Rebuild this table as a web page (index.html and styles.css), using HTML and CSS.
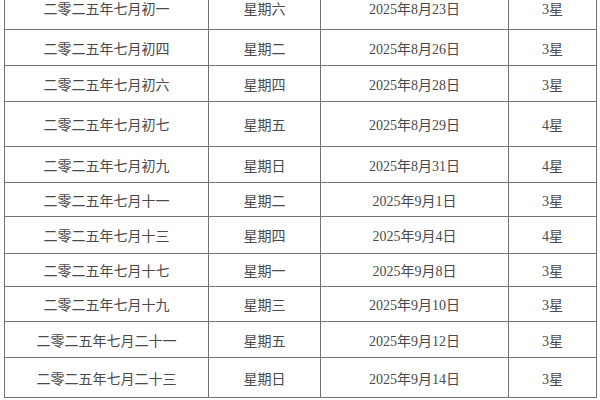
FILE: index.html
```html
<!DOCTYPE html>
<html lang="zh-CN">
<head>
<meta charset="utf-8">
<title>吉日表</title>
<link rel="stylesheet" href="styles.css">
</head>
<body>
<div class="frame">
<table class="days">
<colgroup>
<col class="c-lunar"><col class="c-week"><col class="c-date"><col class="c-star">
</colgroup>
<tbody>
<tr><td>二零二五年七月初一</td><td>星期六</td><td>2025年8月23日</td><td>3星</td></tr>
<tr><td>二零二五年七月初四</td><td>星期二</td><td>2025年8月26日</td><td>3星</td></tr>
<tr><td>二零二五年七月初六</td><td>星期四</td><td>2025年8月28日</td><td>3星</td></tr>
<tr><td>二零二五年七月初七</td><td>星期五</td><td>2025年8月29日</td><td>4星</td></tr>
<tr><td>二零二五年七月初九</td><td>星期日</td><td>2025年8月31日</td><td>4星</td></tr>
<tr><td>二零二五年七月十一</td><td>星期二</td><td>2025年9月1日</td><td>3星</td></tr>
<tr><td>二零二五年七月十三</td><td>星期四</td><td>2025年9月4日</td><td>4星</td></tr>
<tr><td>二零二五年七月十七</td><td>星期一</td><td>2025年9月8日</td><td>3星</td></tr>
<tr><td>二零二五年七月十九</td><td>星期三</td><td>2025年9月10日</td><td>3星</td></tr>
<tr><td>二零二五年七月二十一</td><td>星期五</td><td>2025年9月12日</td><td>3星</td></tr>
<tr><td>二零二五年七月二十三</td><td>星期日</td><td>2025年9月14日</td><td>3星</td></tr>
</tbody>
</table>
</div>
</body>
</html>
```
FILE: styles.css
```css
html, body {
  margin: 0;
  padding: 0;
  background: #ffffff;
}
.frame {
  width: 600px;
  height: 400px;
  overflow: hidden;
}
.days {
  margin: -10px 0 0 4px;
  width: 592px;
  border-collapse: collapse;
  table-layout: fixed;
  font-family: "Liberation Serif", "Noto Sans CJK SC", serif;
  font-size: 14px;
  color: #4a4a4a;
}
.c-lunar { width: 204px; }
.c-week { width: 112px; }
.c-date { width: 188px; }
.c-star { width: 88px; }
.days td {
  border: 1px solid #737373;
  text-align: center;
  vertical-align: middle;
  padding: 4px 0 0 0;
  height: 32px;
  line-height: 16px;
}
.days tr:nth-child(1) td { height: 38px; padding-top: 0; }
.days tr:nth-child(2) td { height: 31px; }
.days tr:nth-child(3) td { height: 31px; }
.days tr:nth-child(4) td { height: 40px; }
.days tr:nth-child(5) td { height: 31px; }
.days tr:nth-child(6) td { height: 29px; }
.days tr:nth-child(7) td { height: 32px; }
.days tr:nth-child(8) td { height: 28px; }
.days tr:nth-child(9) td { height: 30px; }
.days tr:nth-child(10) td { height: 31px; }
.days tr:nth-child(11) td { height: 35px; }
```
